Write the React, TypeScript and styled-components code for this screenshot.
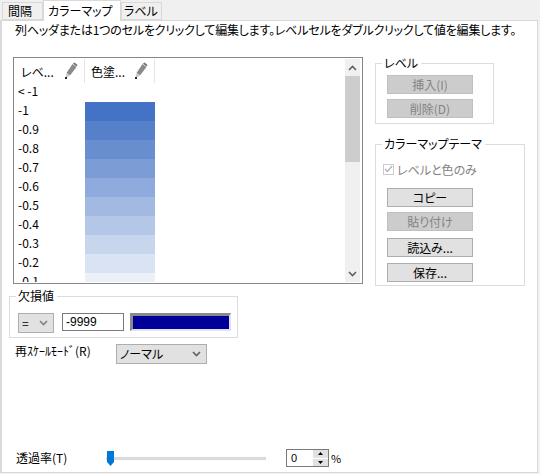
import styled, { createGlobalStyle } from 'styled-components'

const GlobalStyle = createGlobalStyle`
  html, body {
    margin: 0;
    padding: 0;
    background: #ffffff;
  }
  body {
    font-family: "Noto Sans CJK JP", "Liberation Sans", sans-serif;
    font-size: 12px;
    font-feature-settings: "palt";
    color: #000000;
  }
`

const Window = styled.div`
  width: 540px;
  height: 474px;
  display: flex;
  flex-direction: column;
  background: #f0f0f0;
  overflow: hidden;
`

const TabStrip = styled.div`
  display: flex;
  align-items: flex-end;
  height: 20px;
  padding-left: 2px;
`

const Tab = styled.div<{ $active?: boolean; $width: number; $inset: number }>`
  box-sizing: border-box;
  width: ${props => props.$width}px;
  height: ${props => (props.$active ? 21 : 18)}px;
  margin-bottom: ${props => (props.$active ? -1 : 0)}px;
  padding-left: ${props => props.$inset}px;
  position: relative;
  z-index: ${props => (props.$active ? 1 : 0)};
  display: flex;
  align-items: center;
  background: ${props => (props.$active ? '#ffffff' : '#f0f0f0')};
  border: 1px solid #d9d9d9;
  border-bottom: ${props => (props.$active ? 'none' : '1px solid #d9d9d9')};
  line-height: 14px;
  white-space: nowrap;
`

const Panel = styled.div`
  box-sizing: border-box;
  width: 538px;
  height: 453px;
  display: flex;
  flex-direction: column;
  background: #ffffff;
  border: 1px solid #d9d9d9;
  border-width: 1px 1px 1px 2px;
`

const Hint = styled.div`
  margin: 2px 0 0 13px;
  height: 14px;
  line-height: 14px;
  white-space: nowrap;
  letter-spacing: -0.2px;
`

const Main = styled.div`
  display: flex;
  margin-top: 20px;
`

const LeftColumn = styled.div`
  width: 373px;
  flex: none;
  padding-left: 7px;
  box-sizing: border-box;
`

const RightColumn = styled.div`
  display: flex;
  flex-direction: column;
  gap: 13px;
  margin-top: -1px;
`

const ListBox = styled.div`
  box-sizing: border-box;
  width: 350px;
  height: 227px;
  margin-left: 4px;
  border: 1px solid #828790;
  display: flex;
  padding: 1px;
  background: #ffffff;
`

const ListBody = styled.div`
  flex: 1;
  height: 223px;
  overflow: hidden;
`

const HeaderRow = styled.div`
  display: flex;
  height: 24px;
`

const HeaderCell = styled.div`
  box-sizing: border-box;
  width: 70px;
  height: 24px;
  display: flex;
  align-items: center;
  justify-content: space-between;
  padding: 0 6px 0 6px;
  border-right: 1px solid #e5e5e5;
`

const Row = styled.div`
  display: flex;
  height: 19px;
`

const LevelCell = styled.div`
  width: 70px;
  padding-left: 3px;
  box-sizing: border-box;
  line-height: 15px;
  white-space: nowrap;
`

const ColorCell = styled.div<{ $color: string }>`
  width: 70px;
  background: ${props => props.$color};
`

const Scrollbar = styled.div`
  width: 15px;
  height: 223px;
  margin-right: 1px;
  display: flex;
  flex-direction: column;
  background: #f0f0f0;
`

const ScrollArrow = styled.div`
  height: 17px;
  flex: none;
  display: flex;
  align-items: center;
  justify-content: center;
`

const ScrollThumb = styled.div`
  height: 86px;
  flex: none;
  background: #cdcdcd;
`

const ScrollTrack = styled.div`
  flex: 1;
`

const Group = styled.fieldset<{ $width: number; $height: number }>`
  box-sizing: border-box;
  width: ${props => props.$width}px;
  height: ${props => props.$height}px;
  margin: 0;
  padding: 0;
  border: 1px solid #dcdcdc;
  min-width: 0;
`

const GroupLegend = styled.legend`
  margin-left: 6px;
  padding: 0 3px 0 2px;
  line-height: 14px;
  height: 14px;
`

const LevelButtons = styled.div`
  display: flex;
  flex-direction: column;
  gap: 5px;
  padding: 5px 0 0 11px;
`

const ThemeButtons = styled.div`
  display: flex;
  flex-direction: column;
  padding: 0 0 0 11px;
`

const ActionButton = styled.button<{ $gap?: number }>`
  box-sizing: border-box;
  width: 86px;
  height: 19px;
  margin-top: ${props => props.$gap ?? 0}px;
  padding: 0;
  font: inherit;
  font-feature-settings: inherit;
  line-height: 15px;
  color: #000000;
  background: #e1e1e1;
  border: 1px solid #adadad;
  &:disabled {
    color: #838383;
    background: #cccccc;
    border-color: #bfbfbf;
  }
`

const CheckRow = styled.div`
  display: flex;
  align-items: center;
  gap: 3px;
  height: 14px;
  margin: 11px 0 12px 7px;
  color: #838383;
`

const CheckBox = styled.div`
  box-sizing: border-box;
  width: 11px;
  height: 11px;
  display: flex;
  align-items: center;
  justify-content: center;
  border: 1px solid #cccccc;
`

const MissingGroupSlot = styled.div`
  margin-top: 5px;
`

const MissingRow = styled.div`
  display: flex;
  gap: 8px;
  padding: 10px 0 0 8px;
`

const Select = styled.div<{ $width: number; $height: number }>`
  box-sizing: border-box;
  width: ${props => props.$width}px;
  height: ${props => props.$height}px;
  flex: none;
  display: flex;
  align-items: center;
  justify-content: space-between;
  padding: 0 5px 0 3px;
  background: #e1e1e1;
  border: 1px solid #adadad;
  line-height: 14px;
`

const ValueInput = styled.input`
  box-sizing: border-box;
  width: 62px;
  height: 18px;
  padding: 0 3px;
  font: inherit;
  font-family: "Liberation Sans", sans-serif;
  color: #000000;
  border: 1px solid #7a7a7a;
  outline: none;
`

const Swatch = styled.div`
  box-sizing: border-box;
  width: 101px;
  height: 18px;
  margin-left: -2px;
  background: #000099;
  border: 2px solid #e3e3ef;
  border-top: 3px solid #8a8a8a;
  border-left: 3px solid #8a8a8a;
`

const RescaleRow = styled.div`
  display: flex;
  align-items: flex-start;
  margin: 6px 0 0 6px;
`

const FieldLabel = styled.div`
  line-height: 14px;
  white-space: nowrap;
`

const RescaleLabel = styled(FieldLabel)`
  width: 101px;
  flex: none;
`

const Footer = styled.div`
  display: flex;
  align-items: center;
  height: 18px;
  margin-top: auto;
  margin-bottom: 5px;
  padding-left: 14px;
`

const FooterLabel = styled(FieldLabel)`
  width: 90px;
`

const Slider = styled.div`
  position: relative;
  width: 160px;
  height: 14px;
  display: flex;
  align-items: center;
`

const SliderTrack = styled.div`
  width: 100%;
  height: 3px;
  background: #e0e0e0;
  border: 1px solid #d6d6d6;
  box-sizing: border-box;
`

const SliderThumb = styled.svg`
  position: absolute;
  left: 0;
  top: 0;
`

const SpinBox = styled.div`
  box-sizing: border-box;
  width: 43px;
  height: 18px;
  margin-left: 20px;
  display: flex;
  border: 1px solid #7a7a7a;
  background: #ffffff;
`

const SpinValue = styled.div`
  flex: 1;
  padding-left: 4px;
  line-height: 16px;
  font-family: "Liberation Sans", sans-serif;
  font-size: 11px;
`

const SpinButtons = styled.div`
  width: 15px;
  display: flex;
  flex-direction: column;
  gap: 1px;
  background: #ffffff;
`

const SpinButton = styled.div`
  flex: 1;
  display: flex;
  align-items: center;
  justify-content: center;
  background: #e1e1e1;
`

const Percent = styled.div`
  margin-left: 2px;
  font-size: 11px;
  line-height: 14px;
`

const levels = ['-1', '-0.9', '-0.8', '-0.7', '-0.6', '-0.5', '-0.4', '-0.3', '-0.2', '-0.1']

// blue fades to white as the level gets closer to zero
function levelColor(level: string) {
  const t = Math.abs(Number(level))
  const mix = (c: number) => Math.round(255 - (255 - c) * t)
  return `rgb(${mix(0x44)}, ${mix(0x72)}, ${mix(0xc4)})`
}

function PencilIcon() {
  return (
    <svg width="14" height="18" viewBox="0 0 14 18">
      <path d="M8.5 2 L12.5 5 L6 13.5 L2.5 11 Z" fill="#8a8a8a" />
      <path d="M9 1.5 L10.5 0.5 L13.5 3 L12.5 4.5 Z" fill="#6e6e6e" />
      <path d="M2.5 11.5 L5.5 14 L2 15.5 Z" fill="#bdbdbd" />
      <rect x="1" y="15" width="2" height="2" fill="#222222" />
    </svg>
  )
}

function Chevron({ up, color = '#606060', size = 9 }: { up?: boolean; color?: string; size?: number }) {
  return (
    <svg width={size} height="6" viewBox="0 0 9 6">
      <path d={up ? 'M1 5 L4.5 1.5 L8 5' : 'M1 1 L4.5 4.5 L8 1'} fill="none" stroke={color} strokeWidth="1.6" />
    </svg>
  )
}

function SpinArrow({ up }: { up?: boolean }) {
  return (
    <svg width="5" height="3" viewBox="0 0 5 3">
      <path d={up ? 'M2.5 0 L5 3 L0 3 Z' : 'M0 0 L5 0 L2.5 3 Z'} fill="#000000" />
    </svg>
  )
}

export default function App() {
  return (
    <Window>
      <GlobalStyle />
      <TabStrip>
        <Tab $width={41} $inset={5}>間隔</Tab>
        <Tab $width={78} $active $inset={4}>カラーマップ</Tab>
        <Tab $width={41} $inset={2}>ラベル</Tab>
      </TabStrip>
      <Panel>
        <Hint>列ヘッダまたは1つのセルをクリックして編集します。レベルセルをダブルクリックして値を編集します。</Hint>
        <Main>
          <LeftColumn>
            <ListBox>
              <ListBody>
                <HeaderRow>
                  <HeaderCell>レベ... <PencilIcon /></HeaderCell>
                  <HeaderCell>色塗... <PencilIcon /></HeaderCell>
                </HeaderRow>
                <Row>
                  <LevelCell>{'< -1'}</LevelCell>
                </Row>
                {levels.map(level => (
                  <Row key={level}>
                    <LevelCell>{level}</LevelCell>
                    <ColorCell $color={levelColor(level)} />
                  </Row>
                ))}
              </ListBody>
              <Scrollbar>
                <ScrollArrow><Chevron up /></ScrollArrow>
                <ScrollThumb />
                <ScrollTrack />
                <ScrollArrow><Chevron /></ScrollArrow>
              </Scrollbar>
            </ListBox>
            <MissingGroupSlot>
              <Group $width={229} $height={49}>
                <GroupLegend>欠損値</GroupLegend>
                <MissingRow>
                  <Select $width={36} $height={20}>= <Chevron color="#808080" /></Select>
                  <ValueInput defaultValue="-9999" />
                  <Swatch />
                </MissingRow>
              </Group>
            </MissingGroupSlot>
            <RescaleRow>
              <RescaleLabel>再ｽｹｰﾙﾓｰﾄﾞ(R)</RescaleLabel>
              <Select $width={91} $height={20}>ノーマル <Chevron color="#606060" /></Select>
            </RescaleRow>
          </LeftColumn>
          <RightColumn>
            <Group $width={119} $height={68}>
              <GroupLegend>レベル</GroupLegend>
              <LevelButtons>
                <ActionButton disabled>挿入(I)</ActionButton>
                <ActionButton disabled>削除(D)</ActionButton>
              </LevelButtons>
            </Group>
            <Group $width={150} $height={149}>
              <GroupLegend>カラーマップテーマ</GroupLegend>
              <CheckRow>
                <CheckBox>
                  <svg width="9" height="8" viewBox="0 0 9 8">
                    <path d="M1 4 L3.5 6.5 L8 1" fill="none" stroke="#b5b5b5" strokeWidth="1.4" />
                  </svg>
                </CheckBox>
                レベルと色のみ
              </CheckRow>
              <ThemeButtons>
                <ActionButton>コピー</ActionButton>
                <ActionButton disabled $gap={5}>貼り付け</ActionButton>
                <ActionButton $gap={7}>読込み...</ActionButton>
                <ActionButton $gap={6}>保存...</ActionButton>
              </ThemeButtons>
            </Group>
          </RightColumn>
        </Main>
        <Footer>
          <FooterLabel>透過率(T)</FooterLabel>
          <Slider>
            <SliderTrack />
            <SliderThumb width="9" height="15" viewBox="0 0 9 15">
              <path d="M1 0 H8 V11 L4.5 15 L1 11 Z" fill="#0078d7" />
            </SliderThumb>
          </Slider>
          <SpinBox>
            <SpinValue>0</SpinValue>
            <SpinButtons>
              <SpinButton><SpinArrow up /></SpinButton>
              <SpinButton><SpinArrow /></SpinButton>
            </SpinButtons>
          </SpinBox>
          <Percent>%</Percent>
        </Footer>
      </Panel>
    </Window>
  )
}
